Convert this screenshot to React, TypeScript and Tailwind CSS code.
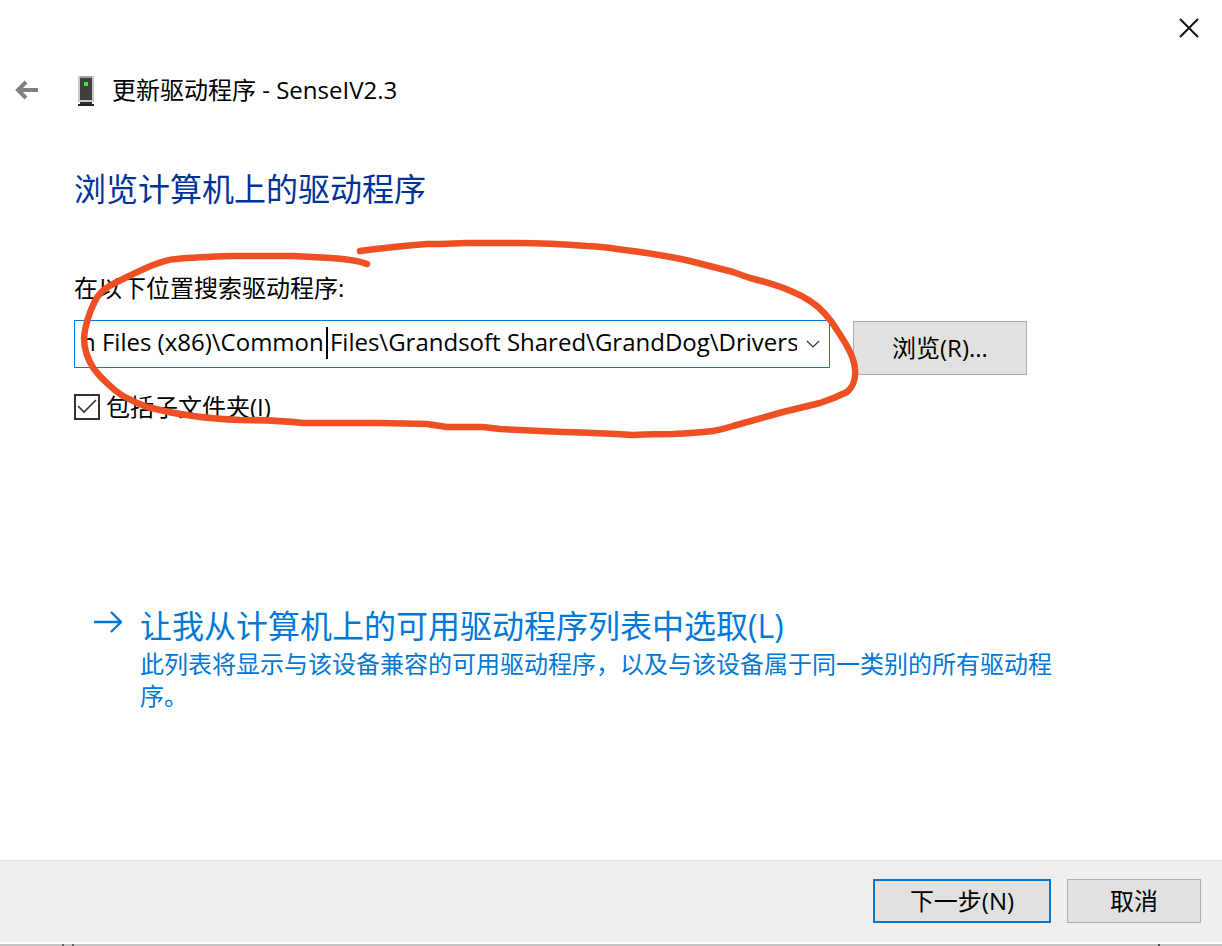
import { useState } from "react";

function DeviceIcon() {
  return (
    <svg viewBox="0 0 16 30" className="mt-[2px] h-[30px] w-4" shapeRendering="crispEdges" aria-hidden="true">
      <rect width="16" height="26" fill="#c5cbd0" />
      <rect x="2" width="12" height="2" fill="#9ba1a5" />
      <rect x="2" y="2" width="12" height="22" fill="#404040" />
      <rect x="6" y="6" width="4" height="4" fill="#2ef22e" />
      <rect x="2" y="26" width="12" height="2" fill="#303030" />
      <rect y="28" width="16" height="2" fill="#202020" />
    </svg>
  );
}

function BackIcon() {
  return (
    <svg viewBox="0 0 24 20" className="h-5 w-6" fill="none" stroke="#808080" strokeWidth="4" aria-hidden="true">
      <path d="M23 10H3M11 2L3 10L11 18" />
    </svg>
  );
}

function MarkerStroke() {
  return (
    <svg
      viewBox="74 272 800 180"
      className="pointer-events-none absolute top-0 left-0 h-[180px] w-[800px] overflow-visible"
      fill="none"
      stroke="#ef5023"
      strokeWidth="6.5"
      strokeLinecap="round"
      strokeLinejoin="round"
      aria-hidden="true"
    >
      <path d="M367 264C357 260 346 259 331 258Q312 257 293 256H233Q196 257 176 259C162 260 145 268 123 279C108 286 100 291 95 301C88 315 85 326 84 338C84 351 88 360 94 369Q100 377 108 384Q115 391 123 396Q134 402 147 407Q170 413 193 416Q215 419 240 420Q275 420 303 423L380 423L427 424L447 427L483 427L500 429L563 432Q600 433 633 435Q655 434 673 434Q695 433 713 431Q724 429 733 426L783 412L820 403Q835 398 847 392C853 387 856 378 855 369C854 357 847 345 837 330C829 317 821 308 810 301Q803 296 793 292Q778 285 750 278L733 272L690 261Q668 256 640 252L617 249Q605 247 587 246Q550 243 517 243H467L440 244H427Q390 247 360 251" />
    </svg>
  );
}

export default function App() {
  const [path, setPath] = useState("n Files (x86)\\Common Files\\Grandsoft Shared\\GrandDog\\Drivers");
  const [includeSub, setIncludeSub] = useState(true);

  return (
    <div className="flex min-h-screen flex-col bg-white font-['Open_Sans','Noto_Sans_CJK_SC',sans-serif] text-2xl text-black">
      <header>
        <div className="flex h-14 justify-end">
          <button type="button" aria-label="关闭" className="flex w-[66px] items-center justify-center">
            <svg viewBox="0 0 20 20" className="size-5" fill="none" stroke="#111" strokeWidth="2" aria-hidden="true">
              <path d="M1 1L19 19M19 1L1 19" />
            </svg>
          </button>
        </div>
        <div className="flex h-[68px] items-center pl-[15px]">
          <button type="button" aria-label="返回">
            <BackIcon />
          </button>
          <div className="ml-[39px] flex items-center gap-[18px]">
            <DeviceIcon />
            <h1>更新驱动程序 - SenseIV2.3</h1>
          </div>
        </div>
      </header>

      <main className="flex-1 px-[74px] pt-[41px]">
        <h2 className="text-[32px] leading-12 text-[#003399]">浏览计算机上的驱动程序</h2>

        <section className="relative mt-[59px]">
          <label htmlFor="location" className="block leading-8">在以下位置搜索驱动程序:</label>
          <div className="mt-4 flex items-start gap-[23px]">
            <div className="relative flex h-12 w-[756px] items-center border border-[#0078d7] pl-[6px]">
              <input
                id="location"
                type="text"
                value={path}
                onChange={(e) => setPath(e.target.value)}
                className="h-11 min-w-0 flex-1 pb-[6px] outline-none"
              />
              <span className="absolute top-[6px] left-[251px] h-8 w-[2px] bg-black" />
              <button type="button" aria-label="展开" className="flex h-full w-8 items-center justify-center">
                <svg viewBox="0 0 14 8" className="h-2 w-[14px]" fill="none" stroke="#333" strokeWidth="1.2" aria-hidden="true">
                  <path d="M1 1L7 7L13 1" />
                </svg>
              </button>
            </div>
            <button type="button" className="mt-px h-[54px] w-[174px] border border-[#adadad] bg-[#e1e1e1]">
              浏览(R)...
            </button>
          </div>
          <label className="mt-4 flex items-center gap-[6px] leading-8">
            <span className="relative flex size-[26px]">
              <input
                type="checkbox"
                checked={includeSub}
                onChange={(e) => setIncludeSub(e.target.checked)}
                className="size-[26px] appearance-none border-2 border-[#333] bg-white"
              />
              {includeSub && (
                <svg viewBox="0 0 26 26" className="pointer-events-none absolute inset-0" fill="none" stroke="#333" strokeWidth="1.6" aria-hidden="true">
                  <path d="M4 12L10 18L22 6" />
                </svg>
              )}
            </span>
            包括子文件夹(I)
          </label>
          <MarkerStroke />
        </section>

        <a href="#list" className="mt-[181px] ml-5 flex w-[970px] max-w-full items-start gap-[18px] text-[#0078d7]">
          <svg viewBox="0 0 28 22" className="mt-[7px] h-[22px] w-7 shrink-0" fill="none" stroke="currentColor" strokeWidth="2.4" aria-hidden="true">
            <path d="M0 11H27M17 1L27 11L17 21" />
          </svg>
          <span>
            <span className="block text-[32px] leading-11">让我从计算机上的可用驱动程序列表中选取(L)</span>
            <span className="block leading-8">此列表将显示与该设备兼容的可用驱动程序，以及与该设备属于同一类别的所有驱动程序。</span>
          </span>
        </a>
      </main>

      <footer>
        <div className="flex h-[82px] justify-end gap-4 border-t border-[#dfdfdf] bg-[#efefef] pt-[18px] pr-[21px]">
          <button type="button" className="h-11 w-[178px] border-2 border-[#0078d7] bg-[#e1e1e1]">下一步(N)</button>
          <button type="button" className="h-11 w-[134px] border border-[#adadad] bg-[#e1e1e1]">取消</button>
        </div>
        <div className="mt-[2px] flex h-[2px] justify-between bg-[#c4c4c4] pr-[62px] pl-[62px]">
          <span className="w-3 border-r-2 border-l-2 border-[#666]" />
          <span className="w-3 border-r-2 border-[#555]" />
        </div>
      </footer>
    </div>
  );
}
